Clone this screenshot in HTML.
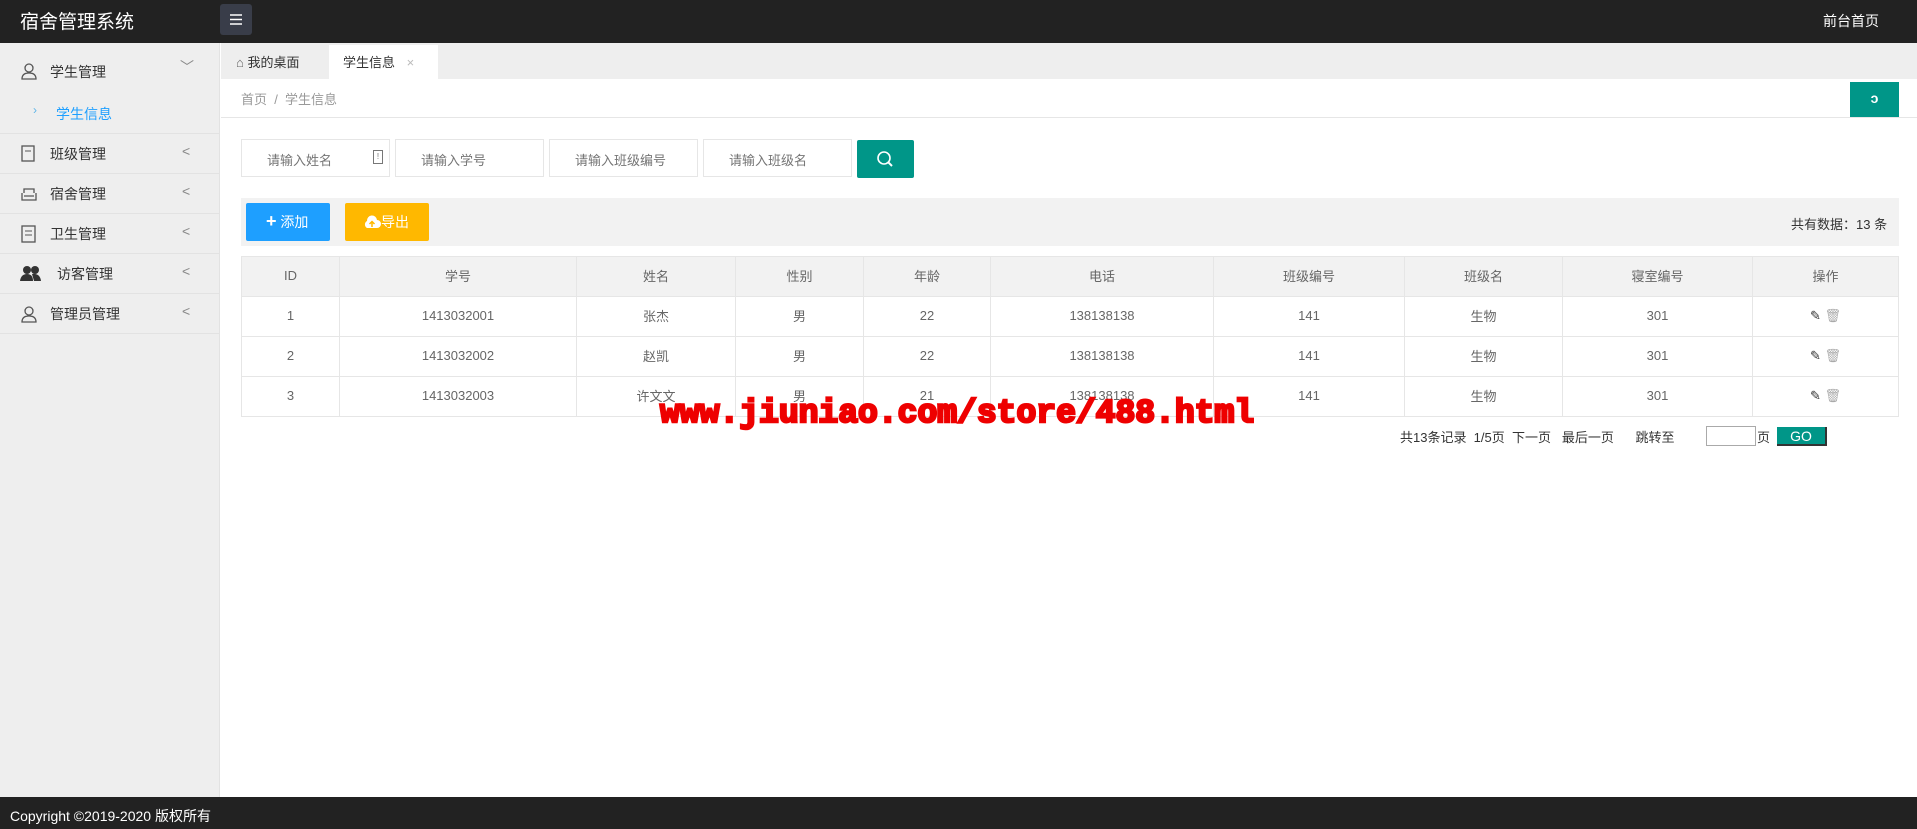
<!DOCTYPE html>
<html><head><meta charset="utf-8"><style>
*{margin:0;padding:0;box-sizing:border-box}
body{width:1917px;height:829px;position:relative;overflow:hidden;background:#fff;font-family:"Liberation Sans","Noto Sans CJK SC",sans-serif;color:#666;font-size:14px}
.abs{position:absolute}
#hdr{left:0;top:0;width:1917px;height:43px;background:#222}
#side{left:0;top:43px;width:220px;height:754px;background:#eee;border-right:1px solid #e2e2e2}
.mi{position:absolute;left:0;width:220px;height:40px;border-bottom:1px solid #e2e2e2;font-size:14px;color:#333}
.mi span.t{position:absolute;left:50px;top:10px}
.mi .ar{position:absolute;left:182px;top:9px;color:#888;font-size:14px}
.ic{position:absolute;left:20px;top:11px}
#foot{left:0;top:797px;width:1917px;height:32px;background:#222;color:#fff;font-size:14px;padding:9px 0 0 10px}
.inp{position:absolute;top:139px;height:38px;border:1px solid #e6e6e6;font-size:13px;color:#757575;padding:10px 0 0 25px;background:#fff}
table{position:absolute;left:241px;top:256px;width:1658px;border-collapse:collapse;font-size:13px;color:#666}
td,th{border:1px solid #e6e6e6;height:40px;text-align:center;font-weight:normal;padding-bottom:2px}
th{background:#f2f2f2}
</style></head><body>
<div id="hdr" class="abs">
 <div class="abs" style="left:20px;top:7px;color:#fff;font-size:19px">宿舍管理系统</div>
 <div class="abs" style="left:220px;top:4px;width:32px;height:31px;background:#393d49;border-radius:3px">
  <svg width="32" height="31"><g stroke="#fff" stroke-width="1.5"><line x1="10" y1="11" x2="22" y2="11"/><line x1="10" y1="15.5" x2="22" y2="15.5"/><line x1="10" y1="20" x2="22" y2="20"/></g></svg>
 </div>
 <div class="abs" style="left:1823px;top:11px;color:#fff;font-size:14px">前台首页</div>
</div>
<div id="side" class="abs">
 <div class="mi" style="top:0;height:91px">
  <svg class="ic" width="18" height="18" style="top:19px"><circle cx="9" cy="6" r="4" fill="none" stroke="#555" stroke-width="1.3"/><path d="M2 17 Q2 11 9 11 Q16 11 16 17 Z" fill="none" stroke="#555" stroke-width="1.3"/></svg>
  <span class="t" style="top:19px">学生管理</span><span class="ar" style="top:14px;left:180px">﹀</span>
  <span style="position:absolute;left:33px;top:60px;color:#5fb5e8;font-size:12px">›</span>
  <span style="position:absolute;left:56px;top:61px;color:#1e9fff;font-size:14px">学生信息</span>
 </div>
 <div class="mi" style="top:91px"><svg class="ic" width="18" height="18"><rect x="2" y="1" width="12" height="15" fill="none" stroke="#555" stroke-width="1.3"/><line x1="5" y1="6" x2="11" y2="6" stroke="#555"/></svg><span class="t">班级管理</span><span class="ar">&lt;</span></div>
 <div class="mi" style="top:131px"><svg class="ic" width="18" height="18"><path d="M2 8 L2 15 L16 15 L16 8 M4 8 L4 4 L14 4 L14 8 M4 11 L14 11" fill="none" stroke="#555" stroke-width="1.3"/></svg><span class="t">宿舍管理</span><span class="ar">&lt;</span></div>
 <div class="mi" style="top:171px"><svg class="ic" width="18" height="18"><rect x="2" y="1" width="13" height="16" fill="none" stroke="#555" stroke-width="1.3"/><line x1="5" y1="6" x2="12" y2="6" stroke="#555"/><line x1="5" y1="10" x2="12" y2="10" stroke="#555"/></svg><span class="t">卫生管理</span><span class="ar">&lt;</span></div>
 <div class="mi" style="top:211px"><svg class="ic" width="22" height="18"><circle cx="7" cy="5" r="4" fill="#333"/><circle cx="15" cy="5" r="4" fill="#333"/><path d="M0 16 Q1 9 7 9 Q13 9 13 16 Z M12 9 Q20 8 21 16 L14 16 Z" fill="#333"/></svg><span class="t" style="left:57px">访客管理</span><span class="ar">&lt;</span></div>
 <div class="mi" style="top:251px"><svg class="ic" width="18" height="18"><circle cx="9" cy="6" r="4" fill="none" stroke="#555" stroke-width="1.3"/><path d="M2 17 Q2 11 9 11 Q16 11 16 17 Z" fill="none" stroke="#555" stroke-width="1.3"/></svg><span class="t">管理员管理</span><span class="ar">&lt;</span></div>
</div>
<div class="abs" style="left:221px;top:43px;width:1696px;height:36px;background:#eee"></div>
<div class="abs" style="left:236px;top:52px;font-size:13px;color:#333"><span style="color:#666">⌂</span> 我的桌面</div>
<div class="abs" style="left:329px;top:45px;width:109px;height:34px;background:#fff;font-size:13px;color:#333;padding:7px 0 0 14px">学生信息 <span style="color:#bbb;margin-left:8px">×</span></div>
<div class="abs" style="left:221px;top:117px;width:1696px;height:1px;background:#e6e6e6"></div>
<div class="abs" style="left:241px;top:89px;font-size:13px;color:#999">首页 &nbsp;/&nbsp; 学生信息</div>
<div class="abs" style="left:1850px;top:82px;width:49px;height:35px;background:#009688;color:#fff;text-align:center;font-size:14px;padding-top:8px;font-weight:bold">ɔ</div>
<div class="inp" style="left:241px;width:149px">请输入姓名<span style="position:absolute;left:131px;top:10px;width:10px;height:14px;border:1px solid #777;font-size:8px;line-height:12px;text-align:center">!</span></div>
<div class="inp" style="left:395px;width:149px">请输入学号</div>
<div class="inp" style="left:549px;width:149px">请输入班级编号</div>
<div class="inp" style="left:703px;width:149px">请输入班级名</div>
<div class="abs" style="left:857px;top:140px;width:57px;height:38px;background:#009688;border-radius:2px"><svg width="57" height="38"><circle cx="27" cy="18" r="6" fill="none" stroke="#fff" stroke-width="1.6"/><line x1="31" y1="22" x2="35" y2="26" stroke="#fff" stroke-width="2"/></svg></div>
<div class="abs" style="left:241px;top:198px;width:1658px;height:48px;background:#f2f2f2"></div>
<div class="abs" style="left:246px;top:203px;width:84px;height:38px;background:#1e9fff;border-radius:2px;color:#fff;font-size:14px;padding:9px 0 0 20px"><b style="font-size:18px;line-height:14px">+</b> 添加</div>
<div class="abs" style="left:345px;top:203px;width:84px;height:38px;background:#ffb800;border-radius:2px;color:#fff;font-size:14px;padding:9px 0 0 18px"><svg width="18" height="14" style="vertical-align:-2px"><path d="M4 13 A4 4 0 0 1 4 6 A5 5 0 0 1 14 5 A4 4 0 0 1 14 13 Z" fill="#fff"/><path d="M9 12 L9 7 M6.5 9 L9 6.5 L11.5 9" stroke="#ffb800" stroke-width="1.5" fill="none"/></svg>导出</div>
<div class="abs" style="left:1791px;top:214px;font-size:13px;color:#333">共有数据：13 条</div>
<table>
<tr><th style="width:98px">ID</th><th style="width:237px">学号</th><th style="width:159px">姓名</th><th style="width:128px">性别</th><th style="width:127px">年龄</th><th style="width:223px">电话</th><th style="width:191px">班级编号</th><th style="width:158px">班级名</th><th style="width:190px">寝室编号</th><th>操作</th></tr>
<tr><td>1</td><td>1413032001</td><td>张杰</td><td>男</td><td>22</td><td>138138138</td><td>141</td><td>生物</td><td>301</td><td><span style="color:#333">✎</span> <span style="color:#aaa">🗑</span></td></tr>
<tr><td>2</td><td>1413032002</td><td>赵凯</td><td>男</td><td>22</td><td>138138138</td><td>141</td><td>生物</td><td>301</td><td><span style="color:#333">✎</span> <span style="color:#aaa">🗑</span></td></tr>
<tr><td>3</td><td>1413032003</td><td>许文文</td><td>男</td><td>21</td><td>138138138</td><td>141</td><td>生物</td><td>301</td><td><span style="color:#333">✎</span> <span style="color:#aaa">🗑</span></td></tr>
</table>
<div class="abs" style="left:1400px;top:427px;font-size:13px;color:#333;white-space:nowrap">共13条记录 &nbsp;1/5页 &nbsp;下一页 &nbsp;&nbsp;最后一页 &nbsp;&nbsp;&nbsp;&nbsp; 跳转至</div>
<div class="abs" style="left:1706px;top:426px;width:50px;height:20px;border:1px solid #aaa;background:#fff"></div>
<div class="abs" style="left:1757px;top:427px;font-size:13px;color:#333">页</div>
<div class="abs" style="left:1777px;top:427px;width:50px;height:19px;background:#009688;color:#fff;font-size:14px;text-align:center;line-height:19px;border-right:2px solid #333;border-bottom:2px solid #333">GO</div>
<div class="abs" style="left:660px;top:395px;font-family:'Liberation Mono',monospace;font-weight:bold;font-size:33px;color:#e00;white-space:nowrap;-webkit-text-stroke:2.5px #e00;letter-spacing:0;text-shadow:1px 0 #fff,-1px 0 #fff,0 1px #fff,0 -1px #fff">www.jiuniao.com/store/488.html</div>
<div id="foot" class="abs">Copyright ©2019-2020 版权所有</div>
</body></html>
